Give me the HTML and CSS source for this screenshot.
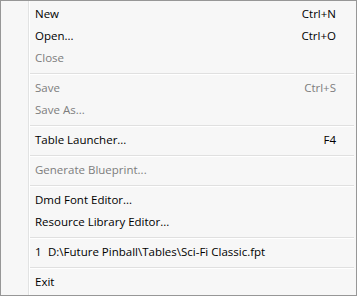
FILE: index.html
```html
<!DOCTYPE html>
<html>
<head>
<meta charset="utf-8">
<link rel="stylesheet" href="styles.css">
</head>
<body>
<div class="menu">
  <div class="item"><span class="label">New</span><span class="key">Ctrl+N</span></div>
  <div class="item"><span class="label">Open...</span><span class="key">Ctrl+O</span></div>
  <div class="item disabled"><span class="label">Close</span><span class="key"></span></div>
  <div class="sep"></div>
  <div class="item disabled"><span class="label">Save</span><span class="key">Ctrl+S</span></div>
  <div class="item disabled"><span class="label">Save As...</span><span class="key"></span></div>
  <div class="sep"></div>
  <div class="item"><span class="label">Table Launcher...</span><span class="key">F4</span></div>
  <div class="sep"></div>
  <div class="item disabled"><span class="label">Generate Blueprint...</span><span class="key"></span></div>
  <div class="sep"></div>
  <div class="item"><span class="label">Dmd Font Editor...</span><span class="key"></span></div>
  <div class="item"><span class="label">Resource Library Editor...</span><span class="key"></span></div>
  <div class="sep"></div>
  <div class="item"><span class="label"><span class="num">1</span>D:\Future Pinball\Tables\Sci-Fi Classic.fpt</span><span class="key"></span></div>
  <div class="sep"></div>
  <div class="item"><span class="label">Exit</span><span class="key"></span></div>
</div>
</body>
</html>
```
FILE: styles.css
```css
html, body {
  margin: 0;
  padding: 0;
  background: #f7f7f7;
}
.menu {
  box-sizing: border-box;
  width: 357px;
  height: 296px;
  border: 1px solid #979797;
  padding: 3px 0 0 0;
  background-color: #f7f7f7;
  background-image: linear-gradient(to right, transparent 27px, #e2e3e3 27px, #e2e3e3 28px, #ffffff 28px, #ffffff 29px, transparent 29px);
  font-family: "Open Sans", "Noto Sans", sans-serif;
  font-size: 11.5px;
  color: #000;
  overflow: hidden;
}
.item {
  box-sizing: border-box;
  height: 22px;
  display: flex;
  align-items: center;
  justify-content: space-between;
  padding: 0 20px 2px 34px;
  line-height: 20px;
}
.item .label {
  white-space: nowrap;
}
.item .num {
  display: inline-block;
  width: 13px;
}
.disabled {
  color: #7d7d7d;
}
.sep {
  height: 8px;
  margin: 0 2px 0 29px;
  background: linear-gradient(to bottom, transparent 3px, #e0e0e0 3px, #e0e0e0 4px, #ffffff 4px, #ffffff 5px, transparent 5px);
}
```
